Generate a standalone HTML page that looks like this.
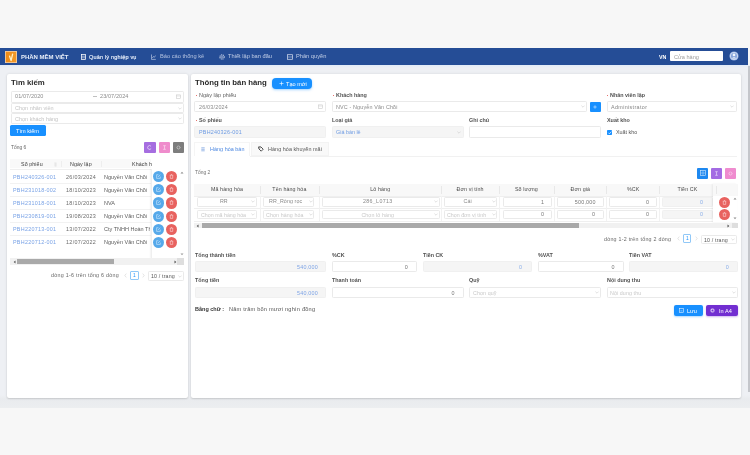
<!DOCTYPE html>
<html><head><meta charset="utf-8">
<style>
*{box-sizing:border-box;margin:0;padding:0}
html,body{width:750px;height:455px;overflow:hidden;background:#f7f7f7;font-family:"Liberation Sans",sans-serif;position:relative}
.a{position:absolute}
.t{position:absolute;white-space:nowrap;line-height:1;will-change:transform;transform:translateY(0.6px)}
.card{background:#fff;border-radius:2px;box-shadow:0 0 3px rgba(0,0,0,.11),0 1px 1.5px rgba(0,0,0,.1)}
.md{-webkit-text-stroke:0.15px currentColor}
.sb{-webkit-text-stroke:0.3px currentColor}
</style></head><body>
<div class="a" style="left:0px;top:65px;width:750px;height:343px;background:linear-gradient(#eef0f4 0,#eef0f4 330px,#e9ebee 334px,#eceef0 343px)"></div>
<div class="a" style="left:0px;top:65px;width:748px;height:2.5px;background:linear-gradient(#e2ebf8,#eef0f4)"></div>
<div class="a" style="left:748.3px;top:66px;width:1.7px;height:325.5px;background:#c4c6cb"></div>
<div class="a card" style="left:7px;top:74.3px;width:180.8px;height:323.3px"></div>
<div class="a card" style="left:191.3px;top:74.3px;width:550px;height:323.3px"></div>
<div class="a" style="left:0px;top:48px;width:748px;height:16.8px;background:#254d96"></div>
<div class="a" style="left:5px;top:51px;width:12px;height:12px;background:linear-gradient(90deg,#f08a14,#f29a2a);border-radius:0.5px;box-shadow:0 0 0 0.8px #f3d2b0 inset"></div>
<svg class="a" style="left:5.2px;top:51px" width="12" height="12" viewBox="0 0 12 12"><path d="M4.6 5.2 L6.1 9.6 L7.6 3.2" stroke="#fff2c8" stroke-width="1.3" fill="none" stroke-linecap="round" stroke-linejoin="round"/></svg>
<div class="t " style="left:21.3px;top:52.7px;font-size:6px;color:#e8eef9;font-weight:bold;letter-spacing:-0.02px">PHẦN MỀM VIỆT</div>
<svg class="a" style="left:81px;top:53.5px" width="5" height="6" viewBox="0 0 5 6"><rect x="0.5" y="0.5" width="4" height="5" fill="none" stroke="#fff" stroke-width="0.75"/><line x1="0.5" y1="2.2" x2="4.5" y2="2.2" stroke="#fff" stroke-width="0.55"/><line x1="0.5" y1="3.8" x2="4.5" y2="3.8" stroke="#fff" stroke-width="0.55"/></svg>
<div class="t md" style="left:89px;top:53.55px;font-size:5.55px;color:#e6edf9;letter-spacing:0.17px">Quản lý nghiệp vụ</div>
<svg class="a" style="left:151px;top:53.6px" width="5" height="6" viewBox="0 0 5 6"><path d="M0.5 0.5 V5.4 H4.8 M1.3 4 L2.5 2.5 L3.3 3.3 L4.6 1.5" fill="none" stroke="#c2cfe8" stroke-width="0.65"/></svg>
<div class="t " style="left:159.6px;top:53.43px;font-size:5.7px;color:#b3c2e0;">Báo cáo thống kê</div>
<svg class="a" style="left:219px;top:54px" width="6" height="6" viewBox="0 0 6 6"><circle cx="3" cy="3" r="2.1" fill="none" stroke="#d0d9ec" stroke-width="1.1" stroke-dasharray="1 0.6"/><circle cx="3" cy="3" r="0.8" fill="#d0d9ec"/></svg>
<div class="t " style="left:228px;top:53.43px;font-size:5.7px;color:#c0cde6;">Thiết lập ban đầu</div>
<svg class="a" style="left:287px;top:53.6px" width="6" height="6" viewBox="0 0 6 6"><rect x="0.5" y="0.7" width="5" height="4.6" fill="none" stroke="#d0d9ec" stroke-width="0.75"/><line x1="0.5" y1="3" x2="5.5" y2="3" stroke="#d0d9ec" stroke-width="0.55"/></svg>
<div class="t " style="left:295.6px;top:53.43px;font-size:5.7px;color:#c0cde6;">Phân quyền</div>
<div class="t " style="left:659.3px;top:53.98px;font-size:5.3px;color:#fff;font-weight:bold">VN</div>
<div class="a" style="left:669.7px;top:51px;width:53.3px;height:10.3px;background:#fff;border-radius:1px"></div>
<div class="t " style="left:674.2px;top:53.54px;font-size:5.6px;color:#9c9c9c;">Cửa hàng</div>
<svg class="a" style="left:729.0px;top:51.4px" width="10" height="10" viewBox="0 0 10 10"><circle cx="5" cy="5" r="4.6" fill="#87a5dc"/><circle cx="5" cy="5" r="3.7" fill="none" stroke="#e8eef9" stroke-width="0.7"/><circle cx="5" cy="3.9" r="1.3" fill="#f2f6fc"/><path d="M2.8 7.6 Q5 4.8 7.2 7.6" fill="#f2f6fc"/></svg>
<div class="t " style="left:10.5px;top:77.98px;font-size:7.8px;color:#2a2a2a;font-weight:bold;letter-spacing:0px">Tìm kiếm</div>
<div class="a" style="left:10.8px;top:90.9px;width:173.4px;height:12px;border:0.6px solid #eaeaea;border-radius:1.2px;background:#fff"></div>
<div class="t " style="left:14.5px;top:93.15px;font-size:5.5px;color:#8a8a8a;letter-spacing:0.1px">01/07/2020</div>
<div class="a" style="left:93.3px;top:96px;width:3.4px;height:0.5px;background:#c0c0c0"></div>
<div class="t " style="left:100.2px;top:93.15px;font-size:5.5px;color:#8a8a8a;letter-spacing:0.1px">23/07/2024</div>
<svg class="a" style="left:176.4px;top:94.4px" width="5" height="5" viewBox="0 0 5 5"><rect x="0.5" y="0.9" width="4" height="3.7" fill="none" stroke="#c8c8c8" stroke-width="0.55"/><line x1="0.5" y1="2" x2="4.5" y2="2" stroke="#c8c8c8" stroke-width="0.45"/></svg>
<div class="a" style="left:10.8px;top:102.6px;width:173.4px;height:10.9px;border:0.6px solid #eaeaea;border-radius:1.2px;background:#fff"></div>
<div class="t " style="left:14.5px;top:105.35px;font-size:5.5px;color:#c4c4c4;">Chọn nhân viên</div>
<svg class="a" style="left:177.5px;top:106.5px" width="4" height="3" viewBox="0 0 4 3"><path d="M0.4 0.6 L2 2.2 L3.6 0.6" fill="none" stroke="#c8c8c8" stroke-width="0.55"/></svg>
<div class="a" style="left:10.8px;top:113.2px;width:173.4px;height:11px;border:0.6px solid #eaeaea;border-radius:1.2px;background:#fff"></div>
<div class="t " style="left:14.5px;top:115.95px;font-size:5.5px;color:#c4c4c4;">Chọn khách hàng</div>
<svg class="a" style="left:177.5px;top:117.1px" width="4" height="3" viewBox="0 0 4 3"><path d="M0.4 0.6 L2 2.2 L3.6 0.6" fill="none" stroke="#c8c8c8" stroke-width="0.55"/></svg>
<div class="a" style="left:10.2px;top:125.1px;width:35.8px;height:11px;background:#1890ff;border-radius:1.5px"></div>
<div class="t " style="left:16.3px;top:127.84px;font-size:5.6px;color:#fff;">Tìm kiếm</div>
<div class="t " style="left:10.6px;top:145.42px;font-size:4.9px;color:#666;">Tổng 6</div>
<div class="a" style="left:144.4px;top:141.8px;width:11.2px;height:11.2px;background:#a66ee0;border-radius:1px"></div>
<svg class="a" style="left:147.4px;top:144.8px" width="5" height="5" viewBox="0 0 5 5"><path d="M4 1.3 A1.9 1.9 0 1 0 4.2 3.4" fill="none" stroke="#f0e6fb" stroke-width="0.7"/></svg>
<div class="a" style="left:158.6px;top:141.8px;width:11.1px;height:11.2px;background:#ef8ccc;border-radius:1px"></div>
<svg class="a" style="left:161.6px;top:144.8px" width="5" height="5" viewBox="0 0 5 5"><path d="M1.2 0.7 H3.8 M2.5 0.7 V4.3 M1.2 4.3 H3.8" fill="none" stroke="#fde8f4" stroke-width="0.6"/></svg>
<div class="a" style="left:172.8px;top:141.8px;width:11.2px;height:11.2px;background:#7d7d7d;border-radius:1px"></div>
<svg class="a" style="left:175.9px;top:144.9px" width="5" height="5" viewBox="0 0 5 5"><circle cx="2.5" cy="2.5" r="1.5" fill="none" stroke="#dedede" stroke-width="0.9" stroke-dasharray="0.9 0.45"/></svg>
<div class="a" style="left:10px;top:158.6px;width:140.7px;height:9.8px;background:#f9f9f9"></div>
<div class="a" style="left:10px;top:168.5px;width:140.7px;height:0.5px;background:#efefef"></div>
<div class="a" style="left:60.5px;top:160.6px;width:0.6px;height:6.4px;background:#eeeeee"></div>
<div class="a" style="left:101.1px;top:160.6px;width:0.6px;height:6.4px;background:#eeeeee"></div>
<div class="t " style="left:20.6px;top:160.98px;font-size:5.3px;color:#3a3a3a;letter-spacing:0.1px">Số phiếu</div>
<svg class="a" style="left:54.2px;top:161.6px" width="3" height="5" viewBox="0 0 3 5"><path d="M1 0.3 V4.5 M2 0.5 V4.7" stroke="#d0d0d0" stroke-width="0.45"/></svg>
<div class="t " style="left:70.3px;top:160.98px;font-size:5.3px;color:#3a3a3a;letter-spacing:0.1px">Ngày lập</div>
<div class="t " style="left:131.7px;top:160.98px;font-size:5.3px;color:#3a3a3a;letter-spacing:0.1px">Khách h</div>
<div class="t " style="left:13.3px;top:174.07px;font-size:5.4px;color:#7aa3e6;letter-spacing:0.27px">PBH240326-001</div>
<div class="t " style="left:65.8px;top:174.07px;font-size:5.4px;color:#6a6a6a;letter-spacing:0.32px">26/03/2024</div>
<div class="t" style="left:104.3px;top:174.05px;font-size:5.5px;color:#5c5c5c;width:46.4px;overflow:hidden">Nguyễn Văn Chồi</div>
<div class="a" style="left:10px;top:182.6px;width:140.7px;height:0.5px;background:#f2f2f2"></div>
<div class="a" style="left:153px;top:171.2px;width:11.4px;height:11.2px;border-radius:50%;background:#56a9ea"></div>
<div class="a" style="left:165.7px;top:171.2px;width:11.4px;height:11.2px;border-radius:50%;background:#e8625f"></div>
<svg class="a" style="left:156.2px;top:174.2px" width="5" height="5" viewBox="0 0 5 5"><path d="M4.3 2.6 V4.4 H0.6 V0.7 H2.4" fill="none" stroke="#dcefff" stroke-width="0.55"/><path d="M1.8 3.1 L4.2 0.7" stroke="#dcefff" stroke-width="0.6"/></svg>
<svg class="a" style="left:168.9px;top:174.2px" width="5" height="5" viewBox="0 0 5 5"><path d="M0.8 1.2 H4.2 M1.3 1.2 V4.4 H3.7 V1.2 M2 0.5 H3" fill="none" stroke="#fde0df" stroke-width="0.55"/></svg>
<div class="t " style="left:13.3px;top:187.09px;font-size:5.4px;color:#7aa3e6;letter-spacing:0.27px">PBH231018-002</div>
<div class="t " style="left:65.8px;top:187.09px;font-size:5.4px;color:#6a6a6a;letter-spacing:0.32px">18/10/2023</div>
<div class="t" style="left:104.3px;top:187.07px;font-size:5.5px;color:#5c5c5c;width:46.4px;overflow:hidden">Nguyễn Văn Chồi</div>
<div class="a" style="left:10px;top:195.62px;width:140.7px;height:0.5px;background:#f2f2f2"></div>
<div class="a" style="left:153px;top:184.3px;width:11.4px;height:11.2px;border-radius:50%;background:#56a9ea"></div>
<div class="a" style="left:165.7px;top:184.3px;width:11.4px;height:11.2px;border-radius:50%;background:#e8625f"></div>
<svg class="a" style="left:156.2px;top:187.3px" width="5" height="5" viewBox="0 0 5 5"><path d="M4.3 2.6 V4.4 H0.6 V0.7 H2.4" fill="none" stroke="#dcefff" stroke-width="0.55"/><path d="M1.8 3.1 L4.2 0.7" stroke="#dcefff" stroke-width="0.6"/></svg>
<svg class="a" style="left:168.9px;top:187.3px" width="5" height="5" viewBox="0 0 5 5"><path d="M0.8 1.2 H4.2 M1.3 1.2 V4.4 H3.7 V1.2 M2 0.5 H3" fill="none" stroke="#fde0df" stroke-width="0.55"/></svg>
<div class="t " style="left:13.3px;top:200.11px;font-size:5.4px;color:#7aa3e6;letter-spacing:0.27px">PBH231018-001</div>
<div class="t " style="left:65.8px;top:200.11px;font-size:5.4px;color:#6a6a6a;letter-spacing:0.32px">18/10/2023</div>
<div class="t" style="left:104.3px;top:200.09px;font-size:5.5px;color:#5c5c5c;width:46.4px;overflow:hidden">NVA</div>
<div class="a" style="left:10px;top:208.64px;width:140.7px;height:0.5px;background:#f2f2f2"></div>
<div class="a" style="left:153px;top:197.4px;width:11.4px;height:11.2px;border-radius:50%;background:#56a9ea"></div>
<div class="a" style="left:165.7px;top:197.4px;width:11.4px;height:11.2px;border-radius:50%;background:#e8625f"></div>
<svg class="a" style="left:156.2px;top:200.4px" width="5" height="5" viewBox="0 0 5 5"><path d="M4.3 2.6 V4.4 H0.6 V0.7 H2.4" fill="none" stroke="#dcefff" stroke-width="0.55"/><path d="M1.8 3.1 L4.2 0.7" stroke="#dcefff" stroke-width="0.6"/></svg>
<svg class="a" style="left:168.9px;top:200.4px" width="5" height="5" viewBox="0 0 5 5"><path d="M0.8 1.2 H4.2 M1.3 1.2 V4.4 H3.7 V1.2 M2 0.5 H3" fill="none" stroke="#fde0df" stroke-width="0.55"/></svg>
<div class="t " style="left:13.3px;top:213.13px;font-size:5.4px;color:#7aa3e6;letter-spacing:0.27px">PBH230819-001</div>
<div class="t " style="left:65.8px;top:213.13px;font-size:5.4px;color:#6a6a6a;letter-spacing:0.32px">19/08/2023</div>
<div class="t" style="left:104.3px;top:213.11px;font-size:5.5px;color:#5c5c5c;width:46.4px;overflow:hidden">Nguyễn Văn Chồi</div>
<div class="a" style="left:10px;top:221.66px;width:140.7px;height:0.5px;background:#f2f2f2"></div>
<div class="a" style="left:153px;top:210.5px;width:11.4px;height:11.2px;border-radius:50%;background:#56a9ea"></div>
<div class="a" style="left:165.7px;top:210.5px;width:11.4px;height:11.2px;border-radius:50%;background:#e8625f"></div>
<svg class="a" style="left:156.2px;top:213.5px" width="5" height="5" viewBox="0 0 5 5"><path d="M4.3 2.6 V4.4 H0.6 V0.7 H2.4" fill="none" stroke="#dcefff" stroke-width="0.55"/><path d="M1.8 3.1 L4.2 0.7" stroke="#dcefff" stroke-width="0.6"/></svg>
<svg class="a" style="left:168.9px;top:213.5px" width="5" height="5" viewBox="0 0 5 5"><path d="M0.8 1.2 H4.2 M1.3 1.2 V4.4 H3.7 V1.2 M2 0.5 H3" fill="none" stroke="#fde0df" stroke-width="0.55"/></svg>
<div class="t " style="left:13.3px;top:226.15px;font-size:5.4px;color:#7aa3e6;letter-spacing:0.27px">PBH220713-001</div>
<div class="t " style="left:65.8px;top:226.15px;font-size:5.4px;color:#6a6a6a;letter-spacing:0.32px">13/07/2022</div>
<div class="t" style="left:104.3px;top:226.13px;font-size:5.5px;color:#5c5c5c;width:46.4px;overflow:hidden">Cty TNHH Hoàn Thành</div>
<div class="a" style="left:10px;top:234.68px;width:140.7px;height:0.5px;background:#f2f2f2"></div>
<div class="a" style="left:153px;top:223.6px;width:11.4px;height:11.2px;border-radius:50%;background:#56a9ea"></div>
<div class="a" style="left:165.7px;top:223.6px;width:11.4px;height:11.2px;border-radius:50%;background:#e8625f"></div>
<svg class="a" style="left:156.2px;top:226.6px" width="5" height="5" viewBox="0 0 5 5"><path d="M4.3 2.6 V4.4 H0.6 V0.7 H2.4" fill="none" stroke="#dcefff" stroke-width="0.55"/><path d="M1.8 3.1 L4.2 0.7" stroke="#dcefff" stroke-width="0.6"/></svg>
<svg class="a" style="left:168.9px;top:226.6px" width="5" height="5" viewBox="0 0 5 5"><path d="M0.8 1.2 H4.2 M1.3 1.2 V4.4 H3.7 V1.2 M2 0.5 H3" fill="none" stroke="#fde0df" stroke-width="0.55"/></svg>
<div class="t " style="left:13.3px;top:239.17px;font-size:5.4px;color:#7aa3e6;letter-spacing:0.27px">PBH220712-001</div>
<div class="t " style="left:65.8px;top:239.17px;font-size:5.4px;color:#6a6a6a;letter-spacing:0.32px">12/07/2022</div>
<div class="t" style="left:104.3px;top:239.15px;font-size:5.5px;color:#5c5c5c;width:46.4px;overflow:hidden">Nguyễn Văn Chồi</div>
<div class="a" style="left:153px;top:236.7px;width:11.4px;height:11.2px;border-radius:50%;background:#56a9ea"></div>
<div class="a" style="left:165.7px;top:236.7px;width:11.4px;height:11.2px;border-radius:50%;background:#e8625f"></div>
<svg class="a" style="left:156.2px;top:239.7px" width="5" height="5" viewBox="0 0 5 5"><path d="M4.3 2.6 V4.4 H0.6 V0.7 H2.4" fill="none" stroke="#dcefff" stroke-width="0.55"/><path d="M1.8 3.1 L4.2 0.7" stroke="#dcefff" stroke-width="0.6"/></svg>
<svg class="a" style="left:168.9px;top:239.7px" width="5" height="5" viewBox="0 0 5 5"><path d="M0.8 1.2 H4.2 M1.3 1.2 V4.4 H3.7 V1.2 M2 0.5 H3" fill="none" stroke="#fde0df" stroke-width="0.55"/></svg>
<div class="a" style="left:150.5px;top:168.6px;width:0.5px;height:89.5px;background:#efefef;box-shadow:-1px 0 1.5px rgba(0,0,0,.06)"></div>
<svg class="a" style="left:179.8px;top:170.8px" width="4" height="3" viewBox="0 0 4 3"><path d="M0.5 2.5 L2 0.7 L3.5 2.5 Z" fill="#8a8a8a"/></svg>
<svg class="a" style="left:179.8px;top:253px" width="4" height="3" viewBox="0 0 4 3"><path d="M0.5 0.5 L2 2.3 L3.5 0.5 Z" fill="#9a9a9a"/></svg>
<div class="a" style="left:10px;top:258.2px;width:174px;height:6.6px;background:#f1f1f1"></div>
<div class="a" style="left:17.2px;top:259.3px;width:97.3px;height:4.5px;background:#a9a9a9"></div>
<svg class="a" style="left:12.6px;top:259.8px" width="3" height="4" viewBox="0 0 3 4"><path d="M2.5 0.5 L0.7 2 L2.5 3.5 Z" fill="#555"/></svg>
<svg class="a" style="left:173.8px;top:259.8px" width="3" height="4" viewBox="0 0 3 4"><path d="M0.5 0.5 L2.3 2 L0.5 3.5 Z" fill="#555"/></svg>
<div class="a" style="left:177px;top:258.2px;width:7px;height:6.6px;background:#dedede"></div>
<div class="t " style="left:50.7px;top:272.08px;font-size:5.3px;color:#666;letter-spacing:0.28px">dòng 1-6 trên tổng 6 dòng</div>
<svg class="a" style="left:123.8px;top:273.2px" width="3" height="5" viewBox="0 0 3 5"><path d="M2.3 0.6 L0.8 2.5 L2.3 4.4" fill="none" stroke="#c8c8c8" stroke-width="0.5"/></svg>
<div class="a" style="left:129.7px;top:271px;width:9.1px;height:8.8px;border:0.6px solid #91c8f7;border-radius:1px;background:#fff"></div>
<div class="t " style="left:132.9px;top:272.72px;font-size:4.9px;color:#1890ff;">1</div>
<svg class="a" style="left:141.8px;top:273.2px" width="3" height="5" viewBox="0 0 3 5"><path d="M0.7 0.6 L2.2 2.5 L0.7 4.4" fill="none" stroke="#c8c8c8" stroke-width="0.5"/></svg>
<div class="a" style="left:147.5px;top:271.2px;width:36.9px;height:10.1px;border:0.6px solid #eaeaea;border-radius:1.2px;background:#fff"></div>
<div class="t " style="left:150.6px;top:272.88px;font-size:5.3px;color:#555;letter-spacing:0.15px">10 / trang</div>
<svg class="a" style="left:177.8px;top:274.8px" width="4" height="3" viewBox="0 0 4 3"><path d="M0.4 0.6 L2 2.2 L3.6 0.6" fill="none" stroke="#c8c8c8" stroke-width="0.55"/></svg>
<div class="t " style="left:194.6px;top:77.88px;font-size:7.8px;color:#2a2a2a;font-weight:bold;letter-spacing:-0.03px">Thông tin bán hàng</div>
<div class="a" style="left:272.4px;top:78.2px;width:39.8px;height:10.8px;background:#1890ff;border-radius:4px;box-shadow:0 1px 2.5px rgba(24,144,255,.4)"></div>
<svg class="a" style="left:278.6px;top:81.1px" width="5" height="5" viewBox="0 0 5 5"><path d="M2.5 0.5 V4.5 M0.5 2.5 H4.5" stroke="#fff" stroke-width="0.6"/></svg>
<div class="t " style="left:285.8px;top:80.84px;font-size:5.6px;color:#fff;">Tạo mới</div>
<div class="a" style="left:195.9px;top:95px;width:1.2px;height:1.2px;background:#e0453f;border-radius:50%"></div>
<div class="t " style="left:198.8px;top:92.47px;font-size:5.4px;color:#5a5a5a;letter-spacing:0.1px">Ngày lập phiếu</div>
<div class="a" style="left:333.2px;top:95px;width:1.2px;height:1.2px;background:#e0453f;border-radius:50%"></div>
<div class="t " style="left:336.1px;top:92.47px;font-size:5.4px;color:#505050;font-weight:bold">Khách hàng</div>
<div class="a" style="left:607.2px;top:95px;width:1.2px;height:1.2px;background:#e0453f;border-radius:50%"></div>
<div class="t " style="left:610.1px;top:92.47px;font-size:5.4px;color:#505050;font-weight:bold">Nhân viên lập</div>
<div class="a" style="left:194.1px;top:100.8px;width:131.8px;height:10.8px;border:0.6px solid #eaeaea;border-radius:1.2px;background:#fff"></div>
<div class="t " style="left:199.1px;top:103.97px;font-size:5.4px;color:#8a8a8a;letter-spacing:0.2px">26/03/2024</div>
<svg class="a" style="left:317.8px;top:103.8px" width="5" height="5" viewBox="0 0 5 5"><rect x="0.5" y="0.9" width="4" height="3.7" fill="none" stroke="#c8c8c8" stroke-width="0.55"/><line x1="0.5" y1="2" x2="4.5" y2="2" stroke="#c8c8c8" stroke-width="0.45"/></svg>
<div class="a" style="left:332.1px;top:101.2px;width:254.7px;height:10.6px;border:0.6px solid #eaeaea;border-radius:1.2px;background:#fff"></div>
<div class="t " style="left:336.4px;top:104.07px;font-size:5.4px;color:#8a8a8a;letter-spacing:0.15px">NVC - Nguyễn Văn Chồi</div>
<svg class="a" style="left:581.2px;top:105.3px" width="4" height="3" viewBox="0 0 4 3"><path d="M0.4 0.6 L2 2.2 L3.6 0.6" fill="none" stroke="#c8c8c8" stroke-width="0.55"/></svg>
<div class="a" style="left:590px;top:101.8px;width:10.9px;height:9.9px;background:#1890ff;border-radius:1px"></div>
<svg class="a" style="left:593.4px;top:104.7px" width="4" height="4" viewBox="0 0 4 4"><path d="M2 0.3 V3.7 M0.3 2 H3.7" stroke="#e8f3ff" stroke-width="0.55"/></svg>
<div class="a" style="left:606.6px;top:101.2px;width:130.6px;height:10.6px;border:0.6px solid #eaeaea;border-radius:1.2px;background:#fff"></div>
<div class="t " style="left:610.8px;top:104.07px;font-size:5.4px;color:#858585;letter-spacing:0.35px">Administrator</div>
<svg class="a" style="left:729.6px;top:105.3px" width="4" height="3" viewBox="0 0 4 3"><path d="M0.4 0.6 L2 2.2 L3.6 0.6" fill="none" stroke="#c8c8c8" stroke-width="0.55"/></svg>
<div class="a" style="left:195.9px;top:119.5px;width:1.2px;height:1.2px;background:#e0453f;border-radius:50%"></div>
<div class="t " style="left:198.8px;top:116.97px;font-size:5.4px;color:#505050;font-weight:bold">Số phiếu</div>
<div class="t " style="left:332.1px;top:116.97px;font-size:5.4px;color:#505050;font-weight:bold">Loại giá</div>
<div class="t " style="left:469px;top:116.97px;font-size:5.4px;color:#505050;font-weight:bold">Ghi chú</div>
<div class="t " style="left:606.6px;top:116.97px;font-size:5.4px;color:#505050;font-weight:bold">Xuất kho</div>
<div class="a" style="left:194.1px;top:125.9px;width:131.8px;height:12.1px;border:0.6px solid #f0f0f0;border-radius:1.2px;background:#f5f5f5"></div>
<div class="t " style="left:199.1px;top:129.07px;font-size:5.4px;color:#6d9be3;letter-spacing:0.25px">PBH240326-001</div>
<div class="a" style="left:332.1px;top:126.3px;width:131.7px;height:11.7px;border:0.6px solid #f0f0f0;border-radius:1.2px;background:#f5f5f5"></div>
<div class="t " style="left:336.4px;top:129.07px;font-size:5.4px;color:#6d9be3;">Giá bán lẻ</div>
<svg class="a" style="left:456.8px;top:130.7px" width="4" height="3" viewBox="0 0 4 3"><path d="M0.4 0.6 L2 2.2 L3.6 0.6" fill="none" stroke="#c8c8c8" stroke-width="0.55"/></svg>
<div class="a" style="left:469.2px;top:126.3px;width:131.4px;height:11.7px;border:0.6px solid #eaeaea;border-radius:1.2px;background:#fff"></div>
<div class="a" style="left:606.6px;top:129.8px;width:5.4px;height:5.2px;background:#1890ff;border-radius:0.8px"></div>
<svg class="a" style="left:606.6px;top:129.8px" width="6" height="6" viewBox="0 0 6 6"><path d="M1.3 2.7 L2.4 3.8 L4.4 1.6" fill="none" stroke="#fff" stroke-width="0.7"/></svg>
<div class="t " style="left:615.6px;top:129.47px;font-size:5.4px;color:#555;">Xuất kho</div>
<div class="a" style="left:250.2px;top:155.8px;width:487.2px;height:0.5px;background:#f1f1f1"></div>
<div class="a" style="left:194.4px;top:142.4px;width:55.8px;height:13.6px;background:#fff;border:0.5px solid #f5f5f5;border-bottom:none"></div>
<div class="a" style="left:251px;top:142.4px;width:78px;height:13.6px;background:#f9f9f9;border:0.5px solid #f3f3f3"></div>
<svg class="a" style="left:201.2px;top:146.8px" width="4" height="5" viewBox="0 0 4 5"><path d="M0.3 0.8H3.7M0.3 2.3H3.7M0.3 3.8H3.7" stroke="#5b8bd6" stroke-width="0.6"/></svg>
<div class="t " style="left:210px;top:146.27px;font-size:5.4px;color:#4a86e0;letter-spacing:0.05px">Hàng hóa bán</div>
<svg class="a" style="left:257.8px;top:146.4px" width="6" height="6" viewBox="0 0 6 6"><path d="M0.6 0.9 L2.9 0.9 L5.2 3.2 L3.2 5.2 L0.9 2.9 Z" fill="none" stroke="#333" stroke-width="0.85"/><circle cx="2" cy="2" r="0.45" fill="#333"/></svg>
<div class="t " style="left:267.6px;top:146.27px;font-size:5.4px;color:#555;letter-spacing:0.08px">Hàng hóa khuyến mãi</div>
<div class="t " style="left:194.8px;top:169.92px;font-size:4.9px;color:#707070;">Tổng 2</div>
<div class="a" style="left:697.2px;top:167.5px;width:10.8px;height:11.3px;background:#1e88f0;border-radius:1px"></div>
<svg class="a" style="left:699.8px;top:170.4px" width="6" height="6" viewBox="0 0 6 6"><rect x="0.6" y="0.6" width="4.8" height="4.8" fill="none" stroke="#d5e9fd" stroke-width="0.6"/><path d="M3 0.6 V5.4 M0.6 3 H5.4" stroke="#d5e9fd" stroke-width="0.45"/></svg>
<div class="a" style="left:711px;top:167.5px;width:10.7px;height:11.3px;background:#a36be3;border-radius:1px"></div>
<svg class="a" style="left:713.9px;top:170.6px" width="5" height="5" viewBox="0 0 5 5"><path d="M1.2 0.7 H3.8 M2.5 0.7 V4.3 M1.2 4.3 H3.8" fill="none" stroke="#efe4fc" stroke-width="0.6"/></svg>
<div class="a" style="left:725.3px;top:167.5px;width:10.8px;height:11.3px;background:#ef8ccf;border-radius:1px"></div>
<svg class="a" style="left:728.2px;top:170.6px" width="5" height="5" viewBox="0 0 5 5"><circle cx="2.5" cy="2.5" r="1.5" fill="none" stroke="#fbe0f0" stroke-width="0.9" stroke-dasharray="0.9 0.45"/></svg>
<div class="a" style="left:194px;top:183.8px;width:543.5px;height:11.8px;background:#f8f8f8"></div>
<div class="t " style="left:194px;width:66px;text-align:center;top:186.08px;font-size:5.3px;color:#4a4a4a;letter-spacing:0.12px">Mã hàng hóa</div>
<div class="a" style="left:259.7px;top:185.5px;width:0.6px;height:8.5px;background:#e8e8e8"></div>
<div class="t " style="left:260px;width:58.8px;text-align:center;top:186.08px;font-size:5.3px;color:#4a4a4a;letter-spacing:0.12px">Tên hàng hóa</div>
<div class="a" style="left:318.5px;top:185.5px;width:0.6px;height:8.5px;background:#e8e8e8"></div>
<div class="t " style="left:318.8px;width:122.5px;text-align:center;top:186.08px;font-size:5.3px;color:#4a4a4a;letter-spacing:0.12px">Lô hàng</div>
<div class="a" style="left:441px;top:185.5px;width:0.6px;height:8.5px;background:#e8e8e8"></div>
<div class="t " style="left:441.3px;width:58.1px;text-align:center;top:186.08px;font-size:5.3px;color:#4a4a4a;letter-spacing:0.12px">Đơn vị tính</div>
<div class="a" style="left:499.1px;top:185.5px;width:0.6px;height:8.5px;background:#e8e8e8"></div>
<div class="t " style="left:499.4px;width:54.8px;text-align:center;top:186.08px;font-size:5.3px;color:#4a4a4a;letter-spacing:0.12px">Số lượng</div>
<div class="a" style="left:553.9px;top:185.5px;width:0.6px;height:8.5px;background:#e8e8e8"></div>
<div class="t " style="left:554.2px;width:52.5px;text-align:center;top:186.08px;font-size:5.3px;color:#4a4a4a;letter-spacing:0.12px">Đơn giá</div>
<div class="a" style="left:606.4px;top:185.5px;width:0.6px;height:8.5px;background:#e8e8e8"></div>
<div class="t " style="left:606.7px;width:52.3px;text-align:center;top:186.08px;font-size:5.3px;color:#4a4a4a;letter-spacing:0.12px">%CK</div>
<div class="a" style="left:658.7px;top:185.5px;width:0.6px;height:8.5px;background:#e8e8e8"></div>
<div class="t " style="left:659px;width:57px;text-align:center;top:186.08px;font-size:5.3px;color:#4a4a4a;letter-spacing:0.12px">Tiền CK</div>
<div class="a" style="left:194px;top:195.5px;width:522px;height:0.5px;background:#efefef"></div>
<div class="a" style="left:194px;top:208.2px;width:522px;height:0.5px;background:#efefef"></div>
<div class="a" style="left:194px;top:221.2px;width:522px;height:0.5px;background:#efefef"></div>
<div class="a" style="left:259.75px;top:196px;width:0.5px;height:25.2px;background:#f2f2f2"></div>
<div class="a" style="left:318.55px;top:196px;width:0.5px;height:25.2px;background:#f2f2f2"></div>
<div class="a" style="left:441.05px;top:196px;width:0.5px;height:25.2px;background:#f2f2f2"></div>
<div class="a" style="left:499.15px;top:196px;width:0.5px;height:25.2px;background:#f2f2f2"></div>
<div class="a" style="left:553.95px;top:196px;width:0.5px;height:25.2px;background:#f2f2f2"></div>
<div class="a" style="left:606.45px;top:196px;width:0.5px;height:25.2px;background:#f2f2f2"></div>
<div class="a" style="left:658.75px;top:196px;width:0.5px;height:25.2px;background:#f2f2f2"></div>
<div class="a" style="left:197.1px;top:196.8px;width:59.7px;height:9.8px;border:0.6px solid #eaeaea;border-radius:1.2px;background:#fff"></div>
<div class="t " style="left:197.1px;width:53.7px;text-align:center;top:198.38px;font-size:5.3px;color:#888;letter-spacing:0.1px">RR</div>
<svg class="a" style="left:251.3px;top:200.2px" width="4" height="3" viewBox="0 0 4 3"><path d="M0.4 0.6 L2 2.2 L3.6 0.6" fill="none" stroke="#c8c8c8" stroke-width="0.55"/></svg>
<div class="a" style="left:262.8px;top:196.8px;width:51.3px;height:9.8px;border:0.6px solid #eaeaea;border-radius:1.2px;background:#fff"></div>
<div class="t " style="left:262.8px;width:45.3px;text-align:center;top:198.38px;font-size:5.3px;color:#888;letter-spacing:0.1px">RR_Ròng rọc</div>
<svg class="a" style="left:308.6px;top:200.2px" width="4" height="3" viewBox="0 0 4 3"><path d="M0.4 0.6 L2 2.2 L3.6 0.6" fill="none" stroke="#c8c8c8" stroke-width="0.55"/></svg>
<div class="a" style="left:322px;top:196.8px;width:117.5px;height:9.8px;border:0.6px solid #eaeaea;border-radius:1.2px;background:#fff"></div>
<div class="t " style="left:322px;width:111.5px;text-align:center;top:198.38px;font-size:5.3px;color:#888;letter-spacing:0.35px">286_L0713</div>
<svg class="a" style="left:434px;top:200.2px" width="4" height="3" viewBox="0 0 4 3"><path d="M0.4 0.6 L2 2.2 L3.6 0.6" fill="none" stroke="#c8c8c8" stroke-width="0.55"/></svg>
<div class="a" style="left:443.7px;top:196.8px;width:53.3px;height:9.8px;border:0.6px solid #eaeaea;border-radius:1.2px;background:#fff"></div>
<div class="t " style="left:443.7px;width:47.3px;text-align:center;top:198.38px;font-size:5.3px;color:#888;letter-spacing:0.1px">Cái</div>
<svg class="a" style="left:491.5px;top:200.2px" width="4" height="3" viewBox="0 0 4 3"><path d="M0.4 0.6 L2 2.2 L3.6 0.6" fill="none" stroke="#c8c8c8" stroke-width="0.55"/></svg>
<div class="a" style="left:502.5px;top:196.8px;width:49.1px;height:9.8px;border:0.6px solid #eaeaea;border-radius:1.2px;background:#fff"></div>
<div class="t " style="left:502.5px;width:41.1px;text-align:right;top:199.07px;font-size:5.4px;color:#777;letter-spacing:0.2px">1</div>
<div class="a" style="left:556.7px;top:196.8px;width:47.7px;height:9.8px;border:0.6px solid #eaeaea;border-radius:1.2px;background:#fff"></div>
<div class="t " style="left:556.7px;width:38.7px;text-align:right;top:199.07px;font-size:5.4px;color:#777;letter-spacing:0.2px">500,000</div>
<div class="a" style="left:608.9px;top:196.8px;width:48.1px;height:9.8px;border:0.6px solid #eaeaea;border-radius:1.2px;background:#fff"></div>
<div class="t " style="left:608.9px;width:40.1px;text-align:right;top:199.07px;font-size:5.4px;color:#777;letter-spacing:0.2px">0</div>
<div class="a" style="left:661.7px;top:196.8px;width:51.3px;height:9.8px;border:0.6px solid #f0f0f0;border-radius:1.2px;background:#f5f5f5"></div>
<div class="t " style="left:661.7px;width:41.3px;text-align:right;top:199.07px;font-size:5.4px;color:#8aaee8;letter-spacing:0.2px">0</div>
<div class="a" style="left:197.1px;top:209.8px;width:59.7px;height:9.6px;border:0.6px solid #eaeaea;border-radius:1.2px;background:#fff"></div>
<div class="t " style="left:200.6px;top:211.68px;font-size:5.3px;color:#c8c8c8;letter-spacing:0px">Chọn mã hàng hóa</div>
<svg class="a" style="left:251.3px;top:213.1px" width="4" height="3" viewBox="0 0 4 3"><path d="M0.4 0.6 L2 2.2 L3.6 0.6" fill="none" stroke="#c8c8c8" stroke-width="0.55"/></svg>
<div class="a" style="left:262.8px;top:209.8px;width:51.3px;height:9.6px;border:0.6px solid #eaeaea;border-radius:1.2px;background:#fff"></div>
<div class="t " style="left:266.3px;top:211.68px;font-size:5.3px;color:#c8c8c8;letter-spacing:0.1px">Chọn hàng hóa</div>
<svg class="a" style="left:308.6px;top:213.1px" width="4" height="3" viewBox="0 0 4 3"><path d="M0.4 0.6 L2 2.2 L3.6 0.6" fill="none" stroke="#c8c8c8" stroke-width="0.55"/></svg>
<div class="a" style="left:322px;top:209.8px;width:117.5px;height:9.6px;border:0.6px solid #eaeaea;border-radius:1.2px;background:#fff"></div>
<div class="t " style="left:322px;width:111.5px;text-align:center;top:211.68px;font-size:5.3px;color:#c8c8c8;letter-spacing:0.1px">Chọn lô hàng</div>
<svg class="a" style="left:434px;top:213.1px" width="4" height="3" viewBox="0 0 4 3"><path d="M0.4 0.6 L2 2.2 L3.6 0.6" fill="none" stroke="#c8c8c8" stroke-width="0.55"/></svg>
<div class="a" style="left:443.7px;top:209.8px;width:53.3px;height:9.6px;border:0.6px solid #eaeaea;border-radius:1.2px;background:#fff"></div>
<div class="t " style="left:447.2px;top:211.68px;font-size:5.3px;color:#c8c8c8;letter-spacing:0px">Chọn đơn vị tính</div>
<svg class="a" style="left:491.5px;top:213.1px" width="4" height="3" viewBox="0 0 4 3"><path d="M0.4 0.6 L2 2.2 L3.6 0.6" fill="none" stroke="#c8c8c8" stroke-width="0.55"/></svg>
<div class="a" style="left:502.5px;top:209.8px;width:49.1px;height:9.6px;border:0.6px solid #eaeaea;border-radius:1.2px;background:#fff"></div>
<div class="t " style="left:502.5px;width:41.1px;text-align:right;top:211.47px;font-size:5.4px;color:#777;letter-spacing:0.2px">0</div>
<div class="a" style="left:556.7px;top:209.8px;width:47.7px;height:9.6px;border:0.6px solid #eaeaea;border-radius:1.2px;background:#fff"></div>
<div class="t " style="left:556.7px;width:38.2px;text-align:right;top:211.47px;font-size:5.4px;color:#777;letter-spacing:0.2px">0</div>
<div class="a" style="left:608.9px;top:209.8px;width:48.1px;height:9.6px;border:0.6px solid #eaeaea;border-radius:1.2px;background:#fff"></div>
<div class="t " style="left:608.9px;width:40.1px;text-align:right;top:211.47px;font-size:5.4px;color:#777;letter-spacing:0.2px">0</div>
<div class="a" style="left:661.7px;top:209.8px;width:51.3px;height:9.6px;border:0.6px solid #f0f0f0;border-radius:1.2px;background:#f5f5f5"></div>
<div class="t " style="left:661.7px;width:41.3px;text-align:right;top:211.47px;font-size:5.4px;color:#8aaee8;letter-spacing:0.2px">0</div>
<div class="a" style="left:713.3px;top:183.8px;width:24.2px;height:38px;background:#fff;box-shadow:-1.5px 0 2px rgba(0,0,0,.07)"></div>
<div class="a" style="left:713.3px;top:183.8px;width:24.2px;height:11.8px;background:#f8f8f8"></div>
<div class="a" style="left:716px;top:185.5px;width:0.6px;height:8.5px;background:#e8e8e8"></div>
<div class="a" style="left:719px;top:196.6px;width:11.2px;height:11px;border-radius:50%;background:#e8625f"></div>
<svg class="a" style="left:722.1px;top:199.6px" width="5" height="5" viewBox="0 0 5 5"><path d="M0.8 1.2 H4.2 M1.3 1.2 V4.4 H3.7 V1.2 M2 0.5 H3" fill="none" stroke="#fde0df" stroke-width="0.55"/></svg>
<div class="a" style="left:719px;top:209.4px;width:11.2px;height:11px;border-radius:50%;background:#e8625f"></div>
<svg class="a" style="left:722.1px;top:212.4px" width="5" height="5" viewBox="0 0 5 5"><path d="M0.8 1.2 H4.2 M1.3 1.2 V4.4 H3.7 V1.2 M2 0.5 H3" fill="none" stroke="#fde0df" stroke-width="0.55"/></svg>
<svg class="a" style="left:733.3px;top:196.5px" width="4" height="3" viewBox="0 0 4 3"><path d="M0.5 2.5 L2 0.7 L3.5 2.5 Z" fill="#8a8a8a"/></svg>
<svg class="a" style="left:733.3px;top:216.5px" width="4" height="3" viewBox="0 0 4 3"><path d="M0.5 0.5 L2 2.3 L3.5 0.5 Z" fill="#8a8a8a"/></svg>
<div class="a" style="left:194px;top:222.6px;width:543.5px;height:5.8px;background:#f1f1f1"></div>
<div class="a" style="left:202.1px;top:223.3px;width:376.6px;height:4.4px;background:#a9a9a9"></div>
<svg class="a" style="left:196.3px;top:223.5px" width="3" height="4" viewBox="0 0 3 4"><path d="M2.5 0.5 L0.7 2 L2.5 3.5 Z" fill="#555"/></svg>
<svg class="a" style="left:727.3px;top:223.5px" width="3" height="4" viewBox="0 0 3 4"><path d="M0.5 0.5 L2.3 2 L0.5 3.5 Z" fill="#555"/></svg>
<div class="a" style="left:732px;top:222.6px;width:5.5px;height:5.8px;background:#dedede"></div>
<div class="t " style="left:604.4px;top:235.98px;font-size:5.3px;color:#666;letter-spacing:0.25px">dòng 1-2 trên tổng 2 dòng</div>
<svg class="a" style="left:676.8px;top:235.8px" width="3" height="5" viewBox="0 0 3 5"><path d="M2.3 0.6 L0.8 2.5 L2.3 4.4" fill="none" stroke="#c8c8c8" stroke-width="0.5"/></svg>
<div class="a" style="left:682.7px;top:233.6px;width:8.3px;height:9.1px;border:0.6px solid #91c8f7;border-radius:1px;background:#fff"></div>
<div class="t " style="left:685.5px;top:235.72px;font-size:4.9px;color:#1890ff;">1</div>
<svg class="a" style="left:694.8px;top:235.8px" width="3" height="5" viewBox="0 0 3 5"><path d="M0.7 0.6 L2.2 2.5 L0.7 4.4" fill="none" stroke="#c8c8c8" stroke-width="0.5"/></svg>
<div class="a" style="left:700.5px;top:234.8px;width:36.6px;height:9.2px;border:0.6px solid #eaeaea;border-radius:1.2px;background:#fff"></div>
<div class="t " style="left:703.6px;top:236.68px;font-size:5.3px;color:#555;letter-spacing:0.15px">10 / trang</div>
<svg class="a" style="left:730.6px;top:237.9px" width="4" height="3" viewBox="0 0 4 3"><path d="M0.4 0.6 L2 2.2 L3.6 0.6" fill="none" stroke="#c8c8c8" stroke-width="0.55"/></svg>
<div class="t " style="left:194.6px;top:251.87px;font-size:5.4px;color:#505050;font-weight:bold">Tổng thành tiền</div>
<div class="t " style="left:332.1px;top:251.87px;font-size:5.4px;color:#505050;font-weight:bold">%CK</div>
<div class="t " style="left:423.3px;top:251.87px;font-size:5.4px;color:#505050;font-weight:bold">Tiền CK</div>
<div class="t " style="left:537.8px;top:251.87px;font-size:5.4px;color:#505050;font-weight:bold">%VAT</div>
<div class="t " style="left:629.4px;top:251.87px;font-size:5.4px;color:#505050;font-weight:bold">Tiền VAT</div>
<div class="a" style="left:194.6px;top:261px;width:131.4px;height:11.2px;border:0.6px solid #f0f0f0;border-radius:1.2px;background:#f5f5f5"></div>
<div class="t " style="left:194.6px;width:122.9px;text-align:right;top:263.97px;font-size:5.4px;color:#7ea4e6;letter-spacing:0.2px">540,000</div>
<div class="a" style="left:332.1px;top:261px;width:85.4px;height:11.2px;border:0.6px solid #eaeaea;border-radius:1.2px;background:#fff"></div>
<div class="t " style="left:332.1px;width:75.9px;text-align:right;top:263.97px;font-size:5.4px;color:#777;letter-spacing:0.2px">0</div>
<div class="a" style="left:423.3px;top:261px;width:109.1px;height:11.2px;border:0.6px solid #f0f0f0;border-radius:1.2px;background:#f5f5f5"></div>
<div class="t " style="left:423.3px;width:99.1px;text-align:right;top:263.97px;font-size:5.4px;color:#8aaee8;letter-spacing:0.2px">0</div>
<div class="a" style="left:537.8px;top:261px;width:85.8px;height:11.2px;border:0.6px solid #eaeaea;border-radius:1.2px;background:#fff"></div>
<div class="t " style="left:537.8px;width:76.8px;text-align:right;top:263.97px;font-size:5.4px;color:#777;letter-spacing:0.2px">0</div>
<div class="a" style="left:629.4px;top:261px;width:108.4px;height:11.2px;border:0.6px solid #f0f0f0;border-radius:1.2px;background:#f5f5f5"></div>
<div class="t " style="left:629.4px;width:99.9px;text-align:right;top:263.97px;font-size:5.4px;color:#8aaee8;letter-spacing:0.2px">0</div>
<div class="t " style="left:194.6px;top:276.77px;font-size:5.4px;color:#505050;font-weight:bold">Tổng tiền</div>
<div class="t " style="left:332.1px;top:276.77px;font-size:5.4px;color:#505050;font-weight:bold">Thanh toán</div>
<div class="t " style="left:469.4px;top:276.77px;font-size:5.4px;color:#505050;font-weight:bold">Quỹ</div>
<div class="t " style="left:606.6px;top:276.77px;font-size:5.4px;color:#505050;font-weight:bold">Nội dung thu</div>
<div class="a" style="left:194.6px;top:287px;width:131.4px;height:10.8px;border:0.6px solid #f0f0f0;border-radius:1.2px;background:#f5f5f5"></div>
<div class="t " style="left:194.6px;width:122.9px;text-align:right;top:289.77px;font-size:5.4px;color:#7ea4e6;letter-spacing:0.2px">540,000</div>
<div class="a" style="left:332.1px;top:287px;width:131.5px;height:10.8px;border:0.6px solid #eaeaea;border-radius:1.2px;background:#fff"></div>
<div class="t " style="left:332.1px;width:122.8px;text-align:right;top:289.77px;font-size:5.4px;color:#777;letter-spacing:0.2px">0</div>
<div class="a" style="left:469.4px;top:287px;width:131.2px;height:10.8px;border:0.6px solid #eaeaea;border-radius:1.2px;background:#fff"></div>
<div class="t " style="left:472.9px;top:289.98px;font-size:5.3px;color:#c8c8c8;letter-spacing:0.1px">Chọn quỹ</div>
<svg class="a" style="left:595.1px;top:290.9px" width="4" height="3" viewBox="0 0 4 3"><path d="M0.4 0.6 L2 2.2 L3.6 0.6" fill="none" stroke="#c8c8c8" stroke-width="0.55"/></svg>
<div class="a" style="left:606.6px;top:287px;width:131.2px;height:10.8px;border:0.6px solid #eaeaea;border-radius:1.2px;background:#fff"></div>
<div class="t " style="left:610.1px;top:289.98px;font-size:5.3px;color:#c8c8c8;letter-spacing:0.1px">Nội dung thu</div>
<svg class="a" style="left:732.3px;top:290.9px" width="4" height="3" viewBox="0 0 4 3"><path d="M0.4 0.6 L2 2.2 L3.6 0.6" fill="none" stroke="#c8c8c8" stroke-width="0.55"/></svg>
<div class="t " style="left:194.6px;top:306.15px;font-size:5.5px;color:#333;font-weight:bold">Bằng chữ :</div>
<div class="t " style="left:228.6px;top:306.14px;font-size:5.6px;color:#555;letter-spacing:0.23px">Năm trăm bốn mươi nghìn đồng</div>
<div class="a" style="left:674.2px;top:305px;width:28.8px;height:10.8px;background:#1890ff;border-radius:2px;box-shadow:0 1px 2px rgba(24,144,255,.35)"></div>
<svg class="a" style="left:679.4px;top:307.9px" width="5" height="5" viewBox="0 0 5 5"><rect x="0.5" y="0.5" width="4" height="4" fill="none" stroke="#e0f0ff" stroke-width="0.6"/><line x1="1.5" y1="2.9" x2="3.5" y2="2.9" stroke="#e0f0ff" stroke-width="0.55"/></svg>
<div class="t " style="left:687.2px;top:307.54px;font-size:5.6px;color:#fff;">Lưu</div>
<div class="a" style="left:706px;top:305px;width:31.8px;height:10.8px;background:#722ed1;border-radius:2px;box-shadow:0 1px 2px rgba(114,46,209,.35)"></div>
<svg class="a" style="left:710.4px;top:307.9px" width="5" height="5" viewBox="0 0 5 5"><circle cx="2.5" cy="2.5" r="1.8" fill="none" stroke="#efe4fc" stroke-width="0.6"/><rect x="1.5" y="1.7" width="2" height="1.6" fill="none" stroke="#efe4fc" stroke-width="0.45"/></svg>
<div class="t " style="left:718.6px;top:307.54px;font-size:5.6px;color:#fff;">In A4</div>
</body></html>
